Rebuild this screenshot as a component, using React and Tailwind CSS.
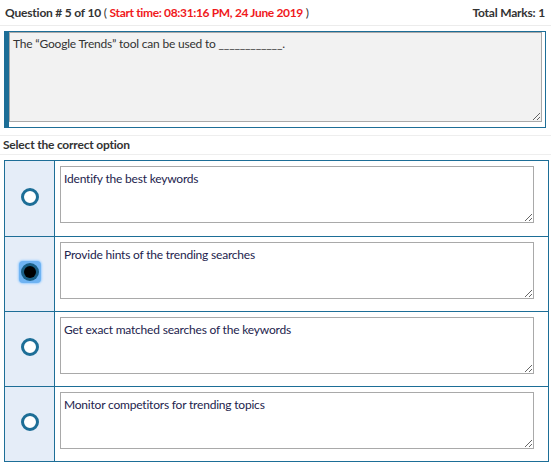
import { useState } from 'react';

const OPTIONS = [
  'Identify the best keywords',
  'Provide hints of the trending searches',
  'Get exact matched searches of the keywords',
  'Monitor competitors for trending topics',
];

function Radio({ checked }) {
  if (checked) {
    return (
      <span className="flex items-center justify-center w-[22px] h-[22px] rounded-[4px] bg-[#6fb3f2] shadow-[0_0_2px_1px_#9fd0ff]">
        <span className="flex items-center justify-center w-[18px] h-[18px] rounded-full bg-[#1a5f86]">
          <span className="w-[12px] h-[12px] rounded-full bg-black" />
        </span>
      </span>
    );
  }
  return <span className="block w-[18px] h-[18px] rounded-full border-[3px] border-[#1d6e97] bg-white" />;
}

export default function App() {
  const [selected, setSelected] = useState(1);

  return (
    <div className="w-[551px] h-[466px] bg-white text-[#333] font-['Lato',sans-serif] text-[12px] tracking-[-0.2px]">
      <div className="flex items-center justify-between h-[26px] px-[5px] border-b border-[#ececec]">
        <div>
          <span className="font-bold">Question # 5 of 10 </span>
          <span>( </span>
          <span className="font-bold text-[#f0191c] tracking-[-0.35px]">Start time: 08:31:16 PM, 24 June 2019</span>
          <span> )</span>
        </div>
        <div className="font-bold pr-[1px]">Total Marks: 1</div>
      </div>

      <div className="ml-[4px] mr-[5px] mt-[5px] border border-l-[5px] border-[#1d6e97] pr-[3px] pb-[5px]">
        <textarea
          readOnly
          value={'The \u201cGoogle Trends\u201d tool can be used to ____________.'}
          className="block w-full h-[90px] bg-[#f2f2f2] border border-[#a9a9a9] px-[3px] py-[2px] text-[12px] text-[#333] outline-none tracking-[-0.2px]"
        />
      </div>

      <div className="mt-[7px] h-[20px] flex items-center px-[3px] border-t border-b border-[#eeeeee] font-bold">
        Select the correct option
      </div>

      <div className="ml-[4px] mr-[2px] mt-[5px] border border-[#1d6e97]">
        {OPTIONS.map((opt, i) => (
          <div key={opt} className={`flex h-[75px] ${i > 0 ? 'border-t border-[#1d6e97]' : ''}`}>
            <button
              type="button"
              onClick={() => setSelected(i)}
              className="w-[50px] shrink-0 flex items-center justify-center pb-[4px] bg-[#e5edf8] border-r border-[#1d6e97]"
            >
              <Radio checked={selected === i} />
            </button>
            <div className="flex-1 pl-[5px] pt-[5px]">
              <textarea
                readOnly
                value={opt}
                className="block w-[474px] h-[57px] bg-white border border-[#a9a9a9] px-[3px] py-[3px] text-[12px] text-[#23234d] outline-none tracking-[-0.2px]"
              />
            </div>
          </div>
        ))}
      </div>
    </div>
  );
}
